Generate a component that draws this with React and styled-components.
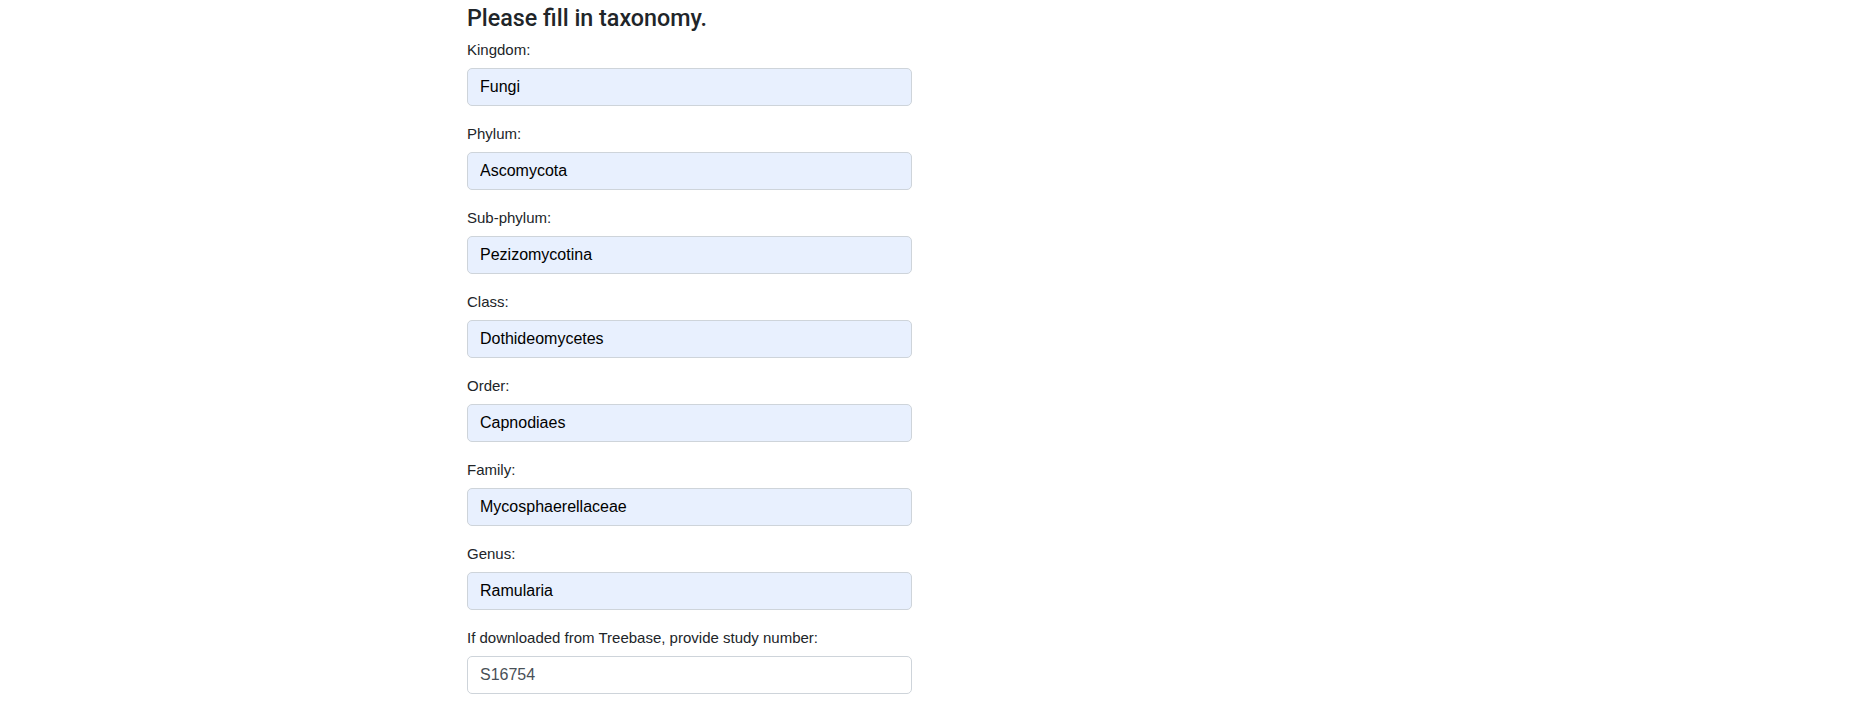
import React from "react";
import styled, { createGlobalStyle } from "styled-components";

const Global = createGlobalStyle`
  html, body { margin: 0; padding: 0; background: #fff; }
  body {
    font-family: "Liberation Sans", Arial, Helvetica, sans-serif;
    color: #212529;
  }
`;

const Page = styled.div`
  padding: 4px 0 0 467px;
`;

const Form = styled.form`
  width: 445px;
  display: flex;
  flex-direction: column;
`;

const Heading = styled.h4`
  margin: 0 0 7px;
  font-family: Roboto, "Liberation Sans", Arial, sans-serif;
  font-size: 23.3px;
  line-height: 28px;
  font-weight: 500;
  color: #212529;
`;

const Field = styled.div`
  display: flex;
  flex-direction: column;
  margin-bottom: 17px;
`;

const Label = styled.label`
  font-size: 15px;
  line-height: 22px;
  margin-bottom: 7px;
  color: #212529;
`;

const Input = styled.input`
  box-sizing: border-box;
  width: 100%;
  height: 38px;
  padding: 6px 12px;
  font-family: "Liberation Sans", Arial, Helvetica, sans-serif;
  font-size: 16px;
  line-height: 1.5;
  color: ${(p) => (p.$filled ? "#000000" : "#495057")};
  background: ${(p) => (p.$filled ? "#e8f0fe" : "#ffffff")};
  border: 1px solid #ced4da;
  border-radius: 5px;
  outline: none;
`;

const fields = [
  ["Kingdom:", "Fungi", true],
  ["Phylum:", "Ascomycota", true],
  ["Sub-phylum:", "Pezizomycotina", true],
  ["Class:", "Dothideomycetes", true],
  ["Order:", "Capnodiaes", true],
  ["Family:", "Mycosphaerellaceae", true],
  ["Genus:", "Ramularia", true],
  ["If downloaded from Treebase, provide study number:", "S16754", false],
];

export default function App() {
  return (
    <Page>
      <Global />
      <Form onSubmit={(e) => e.preventDefault()}>
        <Heading>Please fill in taxonomy.</Heading>
        {fields.map(([label, value, filled], i) => (
          <Field key={i}>
            <Label htmlFor={`f${i}`}>{label}</Label>
            <Input id={`f${i}`} defaultValue={value} $filled={filled} />
          </Field>
        ))}
      </Form>
    </Page>
  );
}
